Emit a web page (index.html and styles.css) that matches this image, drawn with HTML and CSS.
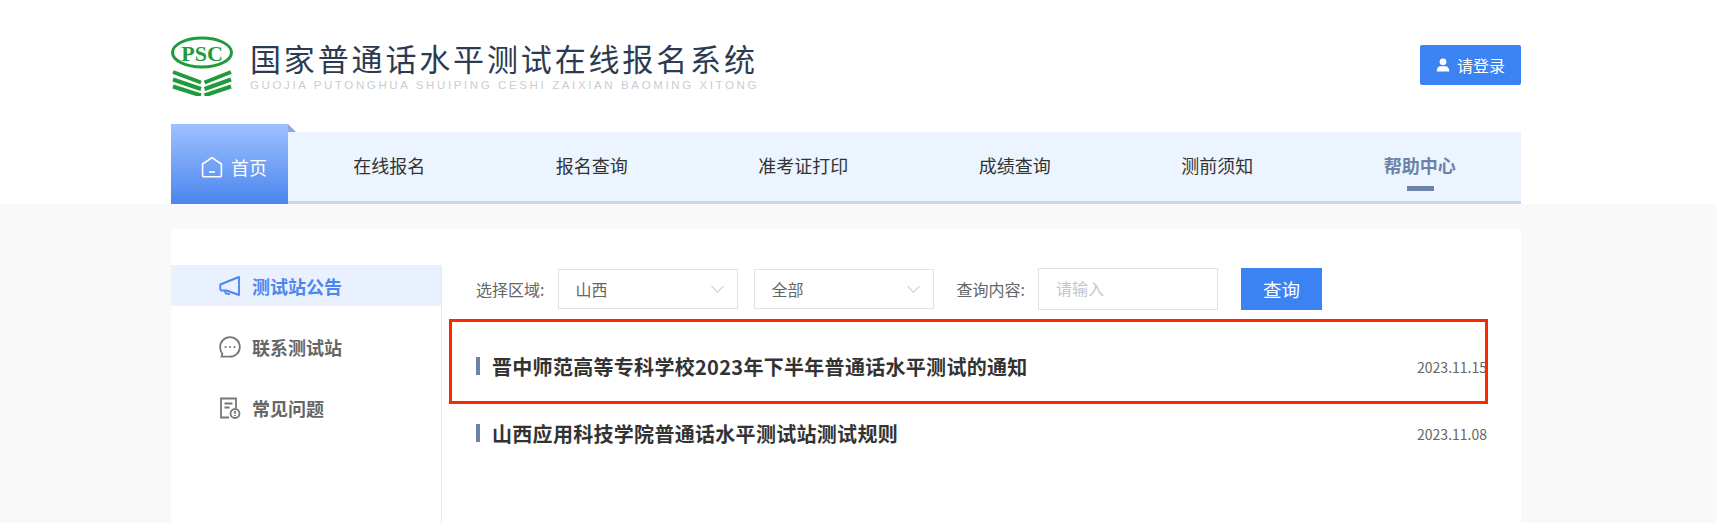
FILE: index.html
```html
<!DOCTYPE html>
<html lang="zh-CN">
<head>
<meta charset="utf-8">
<title>国家普通话水平测试在线报名系统</title>
<link rel="stylesheet" href="styles.css">
</head>
<body>
<header class="header">
  <div class="wrap">
    <div class="top">
      <div class="brand">
        <svg class="logo" width="62" height="60" viewBox="0 0 62 60">
          <ellipse cx="31" cy="16.500" rx="29.500" ry="14.500" fill="#fff" stroke="#1f9a3c" stroke-width="3"/>
          <text x="31" y="24.500" class="logo-text" text-anchor="middle">PSC</text>
          <g fill="none" stroke="#1f9a3c" stroke-width="4">
            <path d="M2 36 30 46.500M2 43.500 30 53M2 50.500 30 59.500"/>
            <path d="M33.500 46.500 60 36M33.500 53 60 43.500M33.500 59.500 60 50.500"/>
          </g>
        </svg>
        <div class="brand-text">
          <div class="brand-cn">国家普通话水平测试在线报名系统</div>
          <div class="brand-en">GUOJIA PUTONGHUA SHUIPING CESHI ZAIXIAN BAOMING XITONG</div>
        </div>
      </div>
      <a class="login">
        <svg width="14" height="14" viewBox="0 0 14 14"><circle cx="7" cy="3.800" r="3.400" fill="#fff"/><path d="M.7 13.500c0-3.600 2-5.200 3.600-5.200h5.400c1.600 0 3.600 1.600 3.600 5.200z" fill="#fff"/></svg>
        <span>请登录</span>
      </a>
    </div>
    <nav class="nav">
      <a class="home">
        <svg width="22" height="22" viewBox="0 0 22 22" fill="none" stroke="#fff" stroke-width="1.600"><path d="M11 1.600 20.400 8v11a1.800 1.800 0 0 1-1.800 1.800H3.400A1.800 1.800 0 0 1 1.600 19V8z" stroke-linejoin="round"/><path d="M8 16h6"/></svg>
        <span>首页</span>
      </a>
      <div class="nav-items">
        <a class="nav-item">在线报名</a>
        <a class="nav-item">报名查询</a>
        <a class="nav-item">准考证打印</a>
        <a class="nav-item">成绩查询</a>
        <a class="nav-item">测前须知</a>
        <a class="nav-item active">帮助中心</a>
      </div>
    </nav>
  </div>
</header>
<main class="wrap card">
  <aside class="side">
    <a class="side-item current">
      <svg width="22" height="22" viewBox="0 0 22 22" fill="none" stroke="currentColor" stroke-width="1.900"><path d="M20 2V20L7.500 15.500H2.500a1.200 1.200 0 0 1-1.200-1.200V9.500L20 2z" stroke-linejoin="round"/><path d="M5.800 15.500l1 3 4.200.6"/></svg>
      <span>测试站公告</span>
    </a>
    <a class="side-item">
      <svg width="22" height="22" viewBox="0 0 22 22" fill="none" stroke="currentColor" stroke-width="1.800"><path d="M11 1.200c5.500 0 9.800 4.200 9.800 9.700S16.500 20.700 11 20.700H2.400l1-2.800A9.700 9.700 0 0 1 1.200 11c0-5.600 4.300-9.800 9.800-9.800z" stroke-linejoin="round"/><g fill="currentColor" stroke="none"><circle cx="6.500" cy="11" r="1.100"/><circle cx="11" cy="11" r="1.100"/><circle cx="15.500" cy="11" r="1.100"/></g></svg>
      <span>联系测试站</span>
    </a>
    <a class="side-item">
      <svg width="22" height="22" viewBox="0 0 22 22" fill="none" stroke="currentColor" stroke-width="1.800"><path d="M10 20.500H2V1.500h15v10"/><path d="M5.500 6.500h8M5.500 10.500h5"/><circle cx="16" cy="16.500" r="4.500"/><path d="M16 14v2.800M16 18v1"/></svg>
      <span>常见问题</span>
    </a>
  </aside>
  <section class="content">
    <form class="filter">
      <label class="filter-label">选择区域:</label>
      <div class="select select-first"><span>山西</span><i class="chevron"></i></div>
      <div class="select"><span>全部</span><i class="chevron"></i></div>
      <label class="filter-label query-label">查询内容:</label>
      <div class="input">请输入</div>
      <button class="search" type="button">查询</button>
    </form>
    <ul class="list">
      <li class="row"><span class="row-title">晋中师范高等专科学校2023年下半年普通话水平测试的通知</span><span class="row-date">2023.11.15</span><i class="mark"></i></li>
      <li class="row"><span class="row-title">山西应用科技学院普通话水平测试站测试规则</span><span class="row-date">2023.11.08</span></li>
    </ul>
  </section>
</main>
</body>
</html>
```
FILE: styles.css
```css
* { box-sizing: border-box; }
html, body { margin: 0; height: 523px; overflow: hidden; }
body { background: #f9f9f9; font-family: "Noto Sans CJK SC", "Noto Sans", sans-serif; color: #333; }
a { display: block; }
.wrap { width: 1350px; margin-left: 171px; }
.header { background: #fff; height: 204px; }
.top { height: 124px; display: flex; justify-content: space-between; align-items: flex-start; }
.brand { display: flex; align-items: flex-start; padding-top: 36px; }
.logo { display: block; }
.logo-text { font: bold 22px "Liberation Serif", serif; fill: #1f9a3c; }
.brand-text { margin-left: 17px; padding-top: 4px; }
.brand-cn { font-size: 31px; line-height: 36px; letter-spacing: 2.850px; color: #2c3a52; white-space: nowrap; font-weight: 400; }
.brand-en { font: 11.500px/14px "Liberation Sans", sans-serif; letter-spacing: 2.620px; color: #c9cdd3; margin-top: 2px; white-space: nowrap; }
.login { margin-top: 45px; width: 101px; height: 40px; background: #3b82f3; color: #fff; border-radius: 2px; display: flex; align-items: center; justify-content: center; gap: 7px; font-size: 16px; }
.login svg { display: block; }
.nav { display: flex; height: 80px; }
.home { position: relative; width: 117px; height: 80px; flex: none; background: linear-gradient(#9fc0ff, #4a86ee); color: #fff; display: flex; align-items: center; gap: 8px; font-size: 18px; padding: 6px 0 0 30px; }
.home::after { content: ""; position: absolute; left: 100%; top: 0; border-style: solid; border-width: 8px 0 0 8px; border-color: transparent transparent transparent #8ba8dc; }
.nav-items { flex: 1; margin-top: 8px; height: 72px; background: #ecf5ff; border-bottom: 3px solid #c8d7ea; display: flex; justify-content: space-around; }
.nav-item { position: relative; font-size: 18px; line-height: 66px; color: #333; white-space: nowrap; }
.nav-item.active { color: #6c82a8; font-weight: 700; }
.nav-item.active::after { content: ""; position: absolute; left: 23px; bottom: 10px; width: 27px; height: 5px; background: #6c82a8; }
.card { margin-top: 25px; height: 294px; background: #fff; display: flex; padding-top: 36px; }
.side { width: 271px; flex: none; border-right: 1px solid #e6e8ec; }
.side-item { height: 41px; margin-bottom: 20px; display: flex; align-items: center; padding-left: 48px; gap: 11px; font-size: 18px; font-weight: 700; color: #666; }
.side-item svg { display: block; color: #777; }
.side-item.current { background: #e8f1fd; color: #4e86f0; }
.side-item.current svg { color: #4e86f0; }
.content { flex: 1; padding-left: 34px; min-width: 0; position: relative; }
.filter { display: flex; align-items: center; height: 44px; margin-top: 2px; }
.filter-label { font-size: 16px; color: #666; margin-right: 14px; white-space: nowrap; }
.select { width: 180px; height: 40px; border: 1px solid #dfe1e8; margin-right: 16px; display: flex; align-items: center; justify-content: space-between; padding: 0 15px 0 16px; font-size: 16px; color: #666; }
.select + .select { margin-right: 22px; }
.chevron { width: 9px; height: 9px; border-right: 1px solid #c4c8d0; border-bottom: 1px solid #c4c8d0; transform: rotate(45deg); margin-top: -5px; }
.query-label { margin-right: 13px; }
.input { width: 180px; height: 42px; border: 1px solid #dfe1e8; padding-left: 17px; line-height: 38px; font-size: 16px; color: #c4c6cc; }
.search { width: 81px; height: 42px; margin-left: 23px; border: 0; background: #3b82f3; color: #fff; font: 18.500px "Noto Sans CJK SC", sans-serif; }
.list { list-style: none; margin: 22px 0 0; padding: 0 34px 0 0; }
.row { position: relative; height: 67px; display: flex; align-items: center; justify-content: space-between; padding-left: 16px; }
.row::before { content: ""; position: absolute; left: 0; top: 24px; width: 4px; height: 18px; background: #6c82a8; }
.row-title { font-size: 20px; font-weight: 700; color: #333; white-space: nowrap; letter-spacing: .3px; }
.row-date { font-size: 14px; color: #666; white-space: nowrap; }
.mark { position: absolute; left: -27px; top: -14px; width: 1039px; height: 85px; border: 3px solid #ff2600; }
```
